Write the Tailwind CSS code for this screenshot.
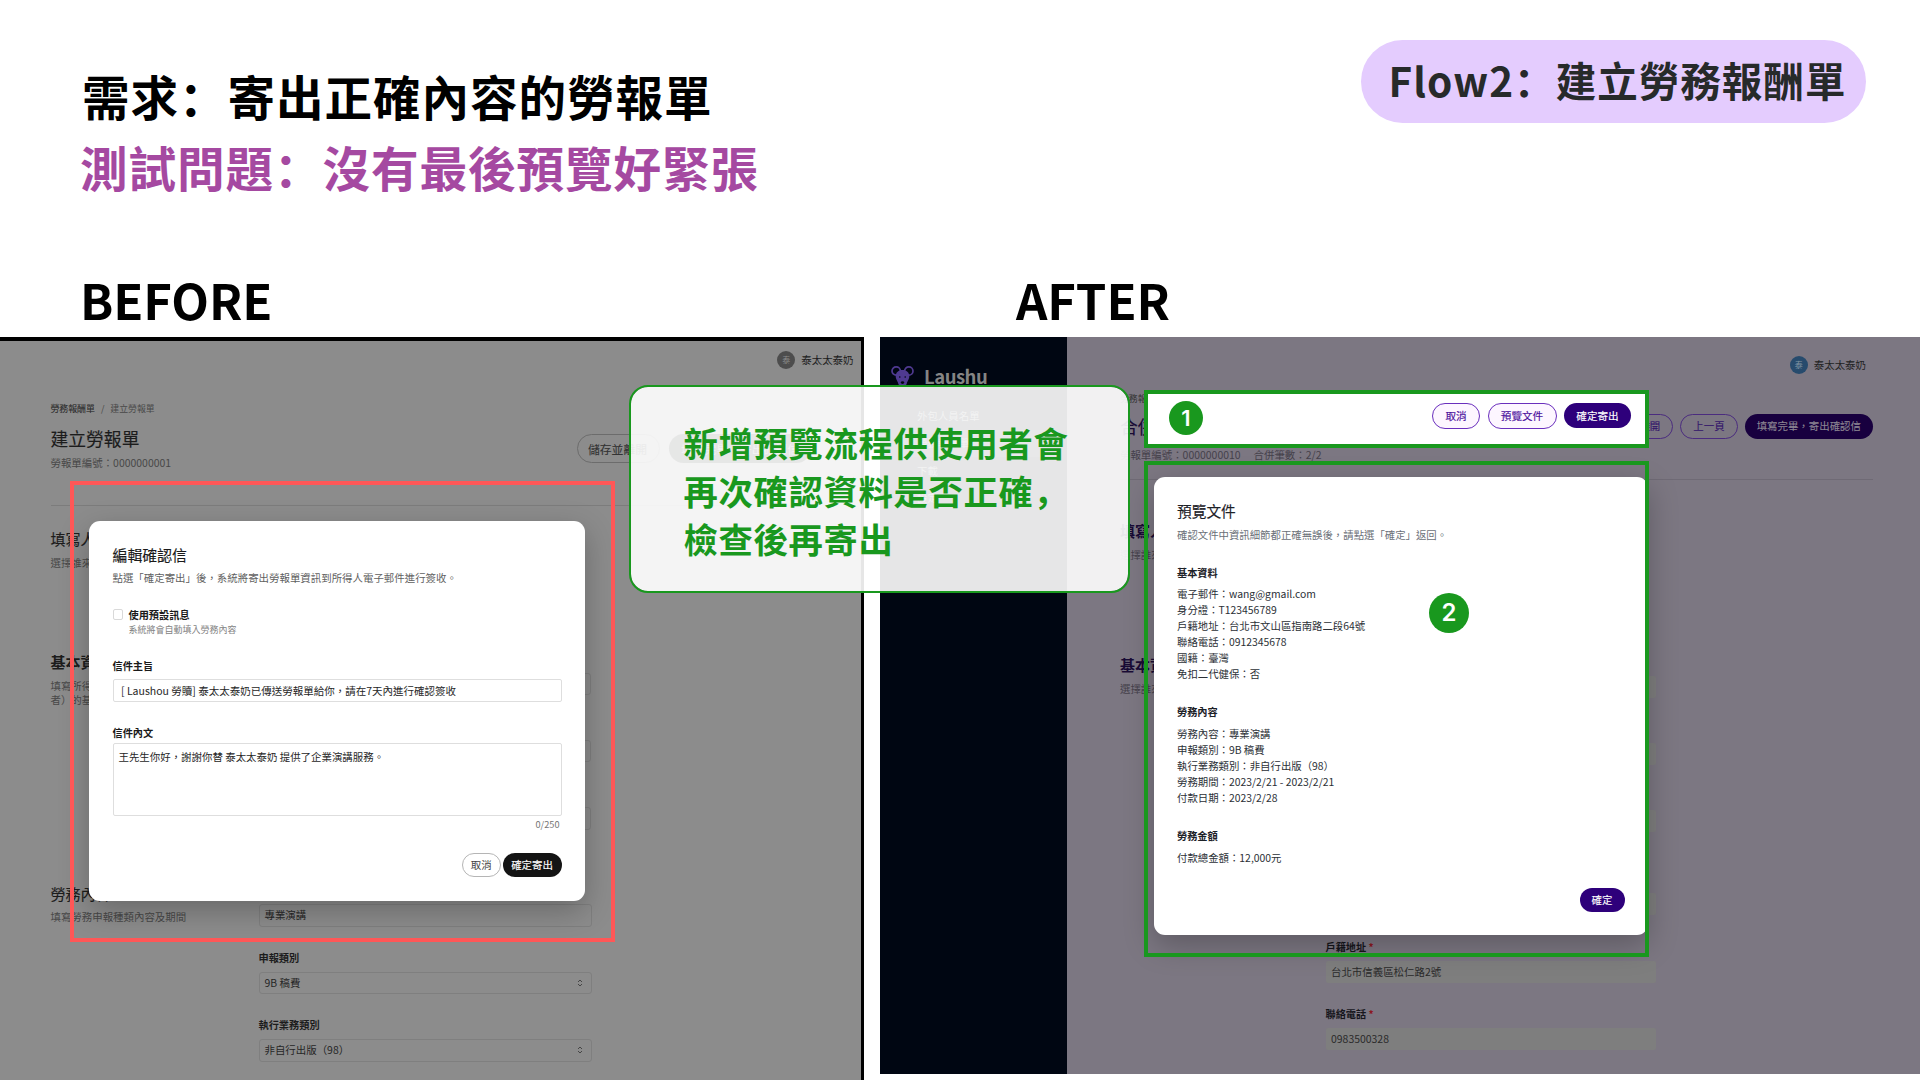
<!DOCTYPE html>
<html lang="zh-Hant">
<head>
<meta charset="utf-8">
<title>Flow2：建立勞務報酬單</title>
<script src="https://cdn.jsdelivr.net/npm/@tailwindcss/browser@4"></script>
</head>
<body class="bg-white">
<div class="relative h-[1080px] w-[1920px] overflow-hidden bg-white font-['Noto_Sans_CJK_TC',sans-serif] text-[10.45px] whitespace-nowrap">

  <!-- Slide heading -->
  <header class="flex h-[337px] flex-col font-['Noto_Sans_CJK_SC',sans-serif] font-bold text-black" lang="zh-Hans">
    <div class="flex h-[261px] shrink-0 items-start justify-between pr-[54px] pl-[81px]">
      <div class="pt-[60px] text-[47.6px] leading-[71px] tracking-[0.9px]">
        <h1 class="pl-[1px]">需求：寄出正確內容的勞報單</h1>
        <h2 class="-ml-[1px] text-[#a549a1]">測試問題：沒有最後預覽好緊張</h2>
      </div>
      <div class="mt-[40px] flex h-[83px] w-[505px] items-center justify-center rounded-full bg-[#e4ccfe] pb-[2px] pl-[8px] text-[40.5px] tracking-[1.05px] text-[#272a2a]">Flow2：建立勞務報酬單</div>
    </div>
    <div class="grid grid-cols-[935px_1fr] pl-[80px] text-[49px] leading-[76px] tracking-[-0.1px]">
      <div>BEFORE</div><div class="pl-[1px]">AFTER</div>
    </div>
  </header>

  <main class="flex gap-4">
    <!-- Before -->
    <section class="h-[743px] w-[864px] overflow-hidden border-t-4 border-r-[3px] border-black bg-[#8c8c8c] pt-[9px] pl-[50.5px] text-[#484848]">
      <div class="flex h-5 items-center justify-end gap-[6px] pr-[7.5px] text-[#1d1d1d]">
        <span class="flex size-[18px] items-center justify-center rounded-full bg-[#4d4d4d] text-[8px] text-[#8c8c8c]">泰</span>
        <span>泰太太泰奶</span>
      </div>
      <div class="mt-[33px] flex justify-between pr-[50px]">
        <div>
          <div class="text-[8.9px] leading-[12px]"><span class="text-[#2c2c2c] [-webkit-text-stroke:0.1px]">勞務報酬單</span><span class="mx-[6px]">/</span><span>建立勞報單</span></div>
          <h3 class="mt-[10.5px] text-[17.8px] leading-[24px] text-[#1c1c1c] [-webkit-text-stroke:0.15px]">建立勞報單</h3>
          <div class="mt-[6px] leading-[14px]">勞報單編號：0000000001</div>
        </div>
        <div class="mt-[31px] flex h-[29px] gap-[9px] text-[11.8px]">
          <span class="flex items-center rounded-full border border-[#6c6c6c] pr-[12px] pl-[10px] text-[#333] [-webkit-text-stroke:0.1px]">儲存並離開</span>
          <span class="flex items-center rounded-full bg-[#0a0a0a] px-[12px] text-[#8c8c8c]">填寫完畢，寄出確認信</span>
        </div>
      </div>
      <div class="mt-[35.5px] mr-[50px] h-px bg-[#7c7c7c]"></div>
      <div class="mt-[23px] h-[123px]">
        <h4 class="text-[15px] leading-[20px] text-[#1c1c1c] [-webkit-text-stroke:0.15px]">填寫人員</h4>
        <p class="mt-[7px] leading-[14px]">選擇誰來填寫</p>
      </div>
      <div class="grid h-[231.5px] grid-cols-[208px_332px]">
        <div>
          <h4 class="text-[15px] leading-[20px] font-bold text-[#1c1c1c]">基本資料</h4>
          <p class="mt-[6.5px] leading-[14.5px]">填寫所得人（勞務提供<br>者）的基本資料</p>
        </div>
        <div class="flex flex-col gap-[44.5px] pt-[20.5px]">
          <div class="h-[22.7px] rounded-[3px] border border-[#7f7f7f]"></div>
          <div class="h-[22.7px] rounded-[3px] border border-[#7f7f7f]"></div>
          <div class="h-[22.7px] rounded-[3px] border border-[#7f7f7f]"></div>
        </div>
      </div>
      <div class="grid grid-cols-[208px_333px]">
        <div>
          <h4 class="text-[15px] leading-[20px] text-[#1c1c1c] [-webkit-text-stroke:0.15px]">勞務內容</h4>
          <p class="mt-[6.5px] leading-[14px]">填寫勞務申報種類內容及期間</p>
        </div>
        <div class="pt-[20px] text-[#262626]">
          <div class="flex h-[23px] items-center rounded-[3px] border border-[#7f7f7f] px-[5px]">專業演講</div>
          <div class="mt-[24.5px] text-[10.2px] leading-[14px] font-bold text-[#1c1c1c]">申報類別</div>
          <div class="mt-[6.5px] flex h-[22.5px] items-center justify-between rounded-[3px] border border-[#7f7f7f] pr-[8px] pl-[5px]">9B 稿費
            <svg class="h-[8px] w-[6px]" viewBox="0 0 6 8" fill="none" stroke="#333" stroke-width=".8"><path d="M1 3 3 1 5 3M1 5 3 7 5 5"/></svg></div>
          <div class="mt-[24px] text-[10.2px] leading-[14px] font-bold text-[#1c1c1c]">執行業務類別</div>
          <div class="mt-[6.5px] flex h-[23px] items-center justify-between rounded-[3px] border border-[#7f7f7f] pr-[8px] pl-[5px]">非自行出版（98）
            <svg class="h-[8px] w-[6px]" viewBox="0 0 6 8" fill="none" stroke="#333" stroke-width=".8"><path d="M1 3 3 1 5 3M1 5 3 7 5 5"/></svg></div>
        </div>
      </div>
    </section>

    <!-- After -->
    <section class="flex h-[737px] w-[1040px] overflow-hidden bg-[#7c7782]">
      <aside class="w-[187px] bg-[#000612] text-[#858585]">
        <div class="mt-[28px] ml-[11px] flex h-[22px] items-center gap-[10px]">
          <svg class="h-[22px] w-[23px]" viewBox="0 0 23 22">
            <g fill="none" stroke="#4f3a91" stroke-width="1.7"><circle cx="5.2" cy="6" r="4.2"/><circle cx="17.8" cy="6" r="4.2"/></g>
            <path fill="#4f3a91" d="M11.5 5c4 0 6.8 2.6 6.8 6 0 3.7-2 4.8-2.5 7.5-.5 2-2 3-4.3 3s-3.8-1-4.3-3C6.7 15.8 4.7 14.7 4.7 11c0-3.4 2.8-6 6.8-6z"/>
            <g fill="#000612"><circle cx="8.8" cy="12" r=".8"/><circle cx="14.2" cy="12" r=".8"/><ellipse cx="11.5" cy="17.6" rx="1.7" ry="1.3"/></g>
          </svg>
          <span class="text-[18.5px] leading-[22px] font-bold tracking-[-0.5px]">Laushu</span>
        </div>
        <nav class="mt-[15.5px] ml-[17px] w-[150px]">
          <div class="flex h-[27px] items-center pl-[20px]">外包人員名單</div>
          <div class="flex h-[27px] items-center rounded bg-[#1a1426] pl-[20px]">勞務報酬單</div>
          <div class="flex h-[28px] items-center pl-[20px]">下載</div>
          <div class="flex h-[27px] items-center pl-[20px]">設定</div>
        </nav>
      </aside>
      <div class="flex-1 pt-[18px] pr-[47px] pl-[53px] text-[#45414b]">
        <div class="flex h-5 items-center justify-end gap-[6px] pr-[7px] text-[#222]">
          <span class="flex size-[18px] items-center justify-center rounded-full bg-[#274b6d] text-[8px] text-[#8497a3]">泰</span>
          <span>泰太太泰奶</span>
        </div>
        <div class="mt-[18px] flex justify-between">
          <div>
            <div class="text-[8.9px] leading-[12px]"><span class="text-[#333]">勞務報酬單</span><span class="mx-[6px]">/</span>合併勞報單</div>
            <h3 class="mt-[8.5px] text-[17.8px] leading-[24px] text-[#190b35] [-webkit-text-stroke:0.15px]">合併勞報單</h3>
            <div class="mt-[10px] flex gap-[13px] leading-[14px]"><span>勞報單編號：0000000010</span><span>合併筆數：2/2</span></div>
          </div>
          <div class="mt-[20.5px] flex h-[25px] gap-[7px] text-[#33146a] [-webkit-text-stroke:0.1px]">
            <span class="flex items-center rounded-full border border-[#4b2c7f] px-[12px]">儲存並離開</span>
            <span class="flex items-center rounded-full border border-[#4b2c7f] px-[12px]">上一頁</span>
            <span class="flex items-center rounded-full bg-[#18003f] px-[12px] text-[#8b8592]">填寫完畢，寄出確認信</span>
          </div>
        </div>
        <div class="mt-[17.5px] h-px bg-[#6f6a75]"></div>
        <div class="mt-[41px] h-[134px]">
          <h4 class="text-[15px] leading-[20px] font-bold text-[#190b35]">填寫人員</h4>
          <p class="mt-[6.5px] leading-[14px]">選擇誰來填寫</p>
        </div>
        <div class="grid grid-cols-[206px_330px]">
          <div>
            <h4 class="text-[15px] leading-[20px] font-bold text-[#190b35]">基本資料</h4>
            <p class="mt-[6.5px] leading-[14px]">選擇誰來填寫</p>
          </div>
          <div class="-ml-[0.5px] pt-[21px] text-[#2a2a2a]">
            <div class="h-[21.5px] rounded-[2px] bg-[#7e7e7e]"></div>
            <div class="mt-[45px] h-[22px] rounded-[2px] bg-[#7e7e7e]"></div>
            <div class="mt-[45px] h-[22px] rounded-[2px] bg-[#7e7e7e]"></div>
            <div class="mt-[61.5px] h-[21.5px] rounded-[2px] bg-[#7e7e7e]"></div>
            <div class="mt-[25px] text-[10.2px] leading-[14px] font-bold text-[#16161c]">戶籍地址 <span class="text-[#8c1720]">*</span></div>
            <div class="mt-[7px] flex h-[22px] items-center rounded-[2px] bg-[#7e7e7e] pl-[5.5px]">台北市信義區松仁路2號</div>
            <div class="mt-[24.5px] text-[10.2px] leading-[14px] font-bold text-[#16161c]">聯絡電話 <span class="text-[#8c1720]">*</span></div>
            <div class="mt-[6.5px] flex h-[22px] items-center rounded-[2px] bg-[#7e7e7e] pl-[5.5px]">0983500328</div>
          </div>
        </div>
      </div>
    </section>
  </main>

  <!-- Dialog: edit confirmation mail -->
  <div class="absolute top-[521px] left-[89px] h-[380px] w-[496px] rounded-[11px] bg-white pt-[23.5px] pr-[23.5px] pl-[23.5px] text-[#262626] shadow-[0_10px_30px_rgba(0,0,0,0.25)]">
    <h3 class="text-[14.9px] leading-[20px] text-[#1a1a1a] [-webkit-text-stroke:0.15px]">編輯確認信</h3>
    <p class="mt-[6px] leading-[14px] text-[#5f5f5f]">點選「確定寄出」後，系統將寄出勞報單資訊到所得人電子郵件進行簽收。</p>
    <div class="mt-[23px] flex gap-[6px]">
      <span class="mt-[1px] h-[11px] w-[10px] rounded-[2px] border border-[#d9d9d9]"></span>
      <div>
        <div class="text-[10.2px] leading-[14px] font-bold text-[#1a1a1a]">使用預設訊息</div>
        <div class="mt-[2px] text-[9px] leading-[12px] text-[#828282]">系統將會自動填入勞務內容</div>
      </div>
    </div>
    <div class="mt-[23.5px] text-[10.2px] leading-[14px] font-bold text-[#1a1a1a]">信件主旨</div>
    <div class="mt-[6px] flex h-[23px] items-center rounded-[2px] border border-[#dedede] pl-[7.5px] text-[10.5px]">[ Laushou 勞贖] 泰太太泰奶已傳送勞報單給你，請在7天內進行確認簽收</div>
    <div class="mt-[24px] text-[10.2px] leading-[14px] font-bold text-[#1a1a1a]">信件內文</div>
    <div class="mt-[2.5px] h-[73px] rounded-[2px] border border-[#dedede] pt-[6px] pl-[5px] leading-[14px]">王先生你好，謝謝你替 泰太太泰奶 提供了企業演講服務。</div>
    <div class="mt-[2px] pr-[2px] text-right text-[9.2px] leading-[12px] text-[#757575]">0/250</div>
    <div class="mt-[23px] flex h-[24px] justify-end gap-[2px]">
      <span class="flex w-[38.5px] items-center justify-center rounded-full border border-[#b5b5b5] text-[#444]">取消</span>
      <span class="flex w-[59px] items-center justify-center rounded-full bg-[#141414] text-white [-webkit-text-stroke:0.15px]">確定寄出</span>
    </div>
  </div>
  <div class="absolute top-[481px] left-[70px] h-[461px] w-[545px] border-4 border-[#ff5757]"></div>

  <!-- Step 1: action bar -->
  <div class="absolute top-[390px] left-[1144px] flex h-[58px] w-[505px] items-start justify-between border-4 border-[#19981e] bg-white pt-[7px] pr-[14px] pl-[21px]">
    <span class="flex size-[34px] items-center justify-center rounded-full bg-[#19981e] font-['Inter',sans-serif] text-[22px] font-semibold text-white">1</span>
    <div class="mt-[1.5px] flex h-[26px] gap-[7.5px] text-[10.6px] text-[#4a0d9c] [-webkit-text-stroke:0.15px]">
      <span class="flex w-[48px] items-center justify-center rounded-full border border-[#6a2fbd] bg-[#fdf6ff]">取消</span>
      <span class="flex w-[69px] items-center justify-center rounded-full border border-[#6a2fbd] bg-[#fdf6ff]">預覽文件</span>
      <span class="mt-[0.5px] flex h-[25px] w-[67px] items-center justify-center rounded-full bg-[#2e007b] text-white">確定寄出</span>
    </div>
  </div>

  <!-- Step 2: document preview -->
  <div class="absolute top-[477px] left-[1153.5px] h-[458px] w-[494px] rounded-[11px] bg-white pt-[24px] pr-[23px] pl-[23.5px] text-[10.4px] leading-[16px] text-[#2b3036] shadow-[0_10px_30px_rgba(0,0,0,0.25)]">
    <h3 class="text-[14.7px] leading-[20px] text-[#1c2127] [-webkit-text-stroke:0.15px]">預覽文件</h3>
    <p class="mt-[6.5px] leading-[14px] text-[#6b7078]">確認文件中資訊細節都正確無誤後，請點選「確定」返回。</p>
    <h4 class="mt-[24px] text-[10.2px] leading-[14px] font-bold text-[#1c2127]">基本資料</h4>
    <div class="mt-[6.5px]">
      <p>電子郵件：wang@gmail.com</p>
      <p>身分證：T123456789</p>
      <p>戶籍地址：台北市文山區指南路二段64號</p>
      <p>聯絡電話：0912345678</p>
      <p>國籍：臺灣</p>
      <p>免扣二代健保：否</p>
    </div>
    <h4 class="mt-[23px] text-[10.2px] leading-[14px] font-bold text-[#1c2127]">勞務內容</h4>
    <div class="mt-[6.5px]">
      <p>勞務內容：專業演講</p>
      <p>申報類別：9B 稿費</p>
      <p>執行業務類別：非自行出版（98）</p>
      <p>勞務期間：2023/2/21 - 2023/2/21</p>
      <p>付款日期：2023/2/28</p>
    </div>
    <h4 class="mt-[23.5px] text-[10.2px] leading-[14px] font-bold text-[#1c2127]">勞務金額</h4>
    <p class="mt-[6.5px]">付款總金額：12,000元</p>
    <div class="mt-[22px] flex justify-end">
      <span class="flex h-[24px] w-[45px] items-center justify-center rounded-full bg-[#2e007b] text-white [-webkit-text-stroke:0.15px]">確定</span>
    </div>
  </div>
  <div class="absolute top-[461px] left-[1144px] h-[496px] w-[505px] border-4 border-[#19981e]"></div>
  <span class="absolute top-[593px] left-[1429px] flex size-[40px] items-center justify-center rounded-full bg-[#19981e] font-['Inter',sans-serif] text-[24px] font-semibold text-white">2</span>

  <!-- Callout -->
  <div class="absolute top-[385px] left-[629px] h-[208px] w-[501px] rounded-[19px] border-2 border-[#19981e] bg-white/90 bg-clip-padding pt-[31px] pl-[52.5px] font-['Noto_Sans_CJK_SC',sans-serif] text-[34.3px] leading-[48px] font-bold tracking-[0.7px] text-[#19981e]" lang="zh-Hans">
    新增預覽流程供使用者會<br>再次確認資料是否正確，<br>檢查後再寄出
  </div>
</div>
</body>
</html>
